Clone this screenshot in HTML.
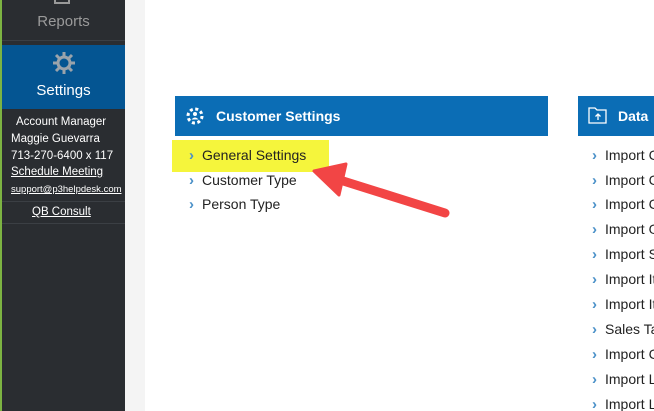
<!DOCTYPE html>
<html><head><style>
html,body{margin:0;width:654px;height:411px;overflow:hidden}
body{background:#fff;font-family:"Liberation Sans",sans-serif;position:relative}
.sb{position:absolute;left:0;top:0;width:125px;height:411px;background:#2a2d31;border-left:2px solid #7cb342;box-sizing:border-box}
.gap{position:absolute;left:125px;top:0;width:20px;height:411px;background:#f4f4f4}
.a{position:absolute}
.hd{position:absolute;top:96px;height:40px;background:#0b6db5;color:#fff;font-weight:bold;font-size:14px;line-height:40px}
.li{position:absolute;font-size:14px;color:#222;white-space:nowrap}
.li:before{content:"›";color:#4a90c8;font-weight:bold;margin-right:8px;font-size:15px}
.sl{position:absolute;left:0;width:125px;color:#fff;font-size:11.5px;white-space:nowrap}
.clip{position:absolute;left:560px;top:0;width:94px;height:411px;overflow:hidden}
</style></head><body>
<div class="sb">
<div class="a" style="left:52px;top:-6px;width:16px;height:10px;border:2px solid #999;border-top:none;box-sizing:border-box"></div>
<div class="a" style="left:0;top:13px;width:123px;text-align:center;color:#9a9a9a;font-size:15px">Reports</div>
<div class="a" style="left:0;top:40px;width:123px;height:1px;background:#3b3f44"></div>
<div class="a" style="left:0;top:45px;width:123px;height:64px;background:#045592"></div>
<svg class="a" style="left:50px;top:51px" width="24" height="24" viewBox="0 0 24 24"><g fill="none" stroke="#9aa3ab" stroke-width="3"><circle cx="12" cy="12" r="6"/><path d="M12 1v5M12 18v5M1 12h5M18 12h5M4 4l4 4M16 16l4 4M20 4l-4 4M8 16l-4 4"/></g></svg>
<div class="a" style="left:0;top:82px;width:123px;text-align:center;color:#fff;font-size:15px">Settings</div>
<div class="sl" style="top:116px;left:14px">Account Manager</div>
<div class="sl" style="top:133px;left:9px">Maggie Guevarra</div>
<div class="sl" style="top:150px;left:9px">713-270-6400 x 117</div>
<div class="sl" style="top:166px;left:9px;text-decoration:underline">Schedule Meeting</div>
<div class="sl" style="top:184px;left:9px;font-size:9.5px;text-decoration:underline">support@p3helpdesk.com</div>
<div class="a" style="left:0;top:201px;width:123px;height:1px;background:#3b3f44"></div>
<div class="sl" style="top:206px;left:30px;text-decoration:underline">QB Consult</div>
<div class="a" style="left:0;top:223px;width:123px;height:1px;background:#3b3f44"></div>
</div>
<div class="gap"></div>
<div class="hd" style="left:175px;width:373px"><svg style="position:absolute;left:10px;top:10px" width="20" height="20" viewBox="0 0 20 20"><circle cx="10" cy="10" r="7" fill="none" stroke="#fff" stroke-width="3" stroke-dasharray="3 2.5"/><circle cx="10" cy="10" r="5" fill="#0b6db5"/><circle cx="10" cy="8" r="2" fill="#fff"/><path d="M6.5 13.5q3.5-4 7 0" fill="#fff"/></svg><span style="position:absolute;left:41px">Customer Settings</span></div>
<div class="a" style="left:172px;top:140px;width:157px;height:32px;background:#f5f53c"></div>
<div class="li" style="left:189px;top:147px">General Settings</div>
<div class="li" style="left:189px;top:172px">Customer Type</div>
<div class="li" style="left:189px;top:196px">Person Type</div>
<div class="clip">
<div class="hd" style="left:18px;width:76px"><svg style="position:absolute;left:10px;top:10px" width="20" height="18" viewBox="0 0 20 18"><path d="M1 2h6l2 2h9v13H1z" fill="none" stroke="#fff" stroke-width="1.3"/><path d="M10 14V8M7.5 10.5L10 8l2.5 2.5" stroke="#fff" fill="none" stroke-width="1.3"/></svg><span style="position:absolute;left:40px">Data Import</span></div>
<div class="li" style="left:32px;top:147px">Import Customers</div>
<div class="li" style="left:32px;top:172px">Import Contacts</div>
<div class="li" style="left:32px;top:196px">Import Categories</div>
<div class="li" style="left:32px;top:221px">Import Options</div>
<div class="li" style="left:32px;top:246px">Import Sites</div>
<div class="li" style="left:32px;top:271px">Import Items</div>
<div class="li" style="left:32px;top:296px">Import Items</div>
<div class="li" style="left:32px;top:321px">Sales Tax</div>
<div class="li" style="left:32px;top:346px">Import Codes</div>
<div class="li" style="left:32px;top:371px">Import Lists</div>
<div class="li" style="left:32px;top:396px">Import Lists</div>
</div>
<svg class="a" style="left:0;top:0" width="654" height="411"><path d="M445 213L340 180" stroke="#f24545" stroke-width="9" stroke-linecap="round"/><path d="M314 171L346 164L339 195Z" fill="#f24545" stroke="#f24545" stroke-width="3" stroke-linejoin="round"/></svg>
</body></html>
